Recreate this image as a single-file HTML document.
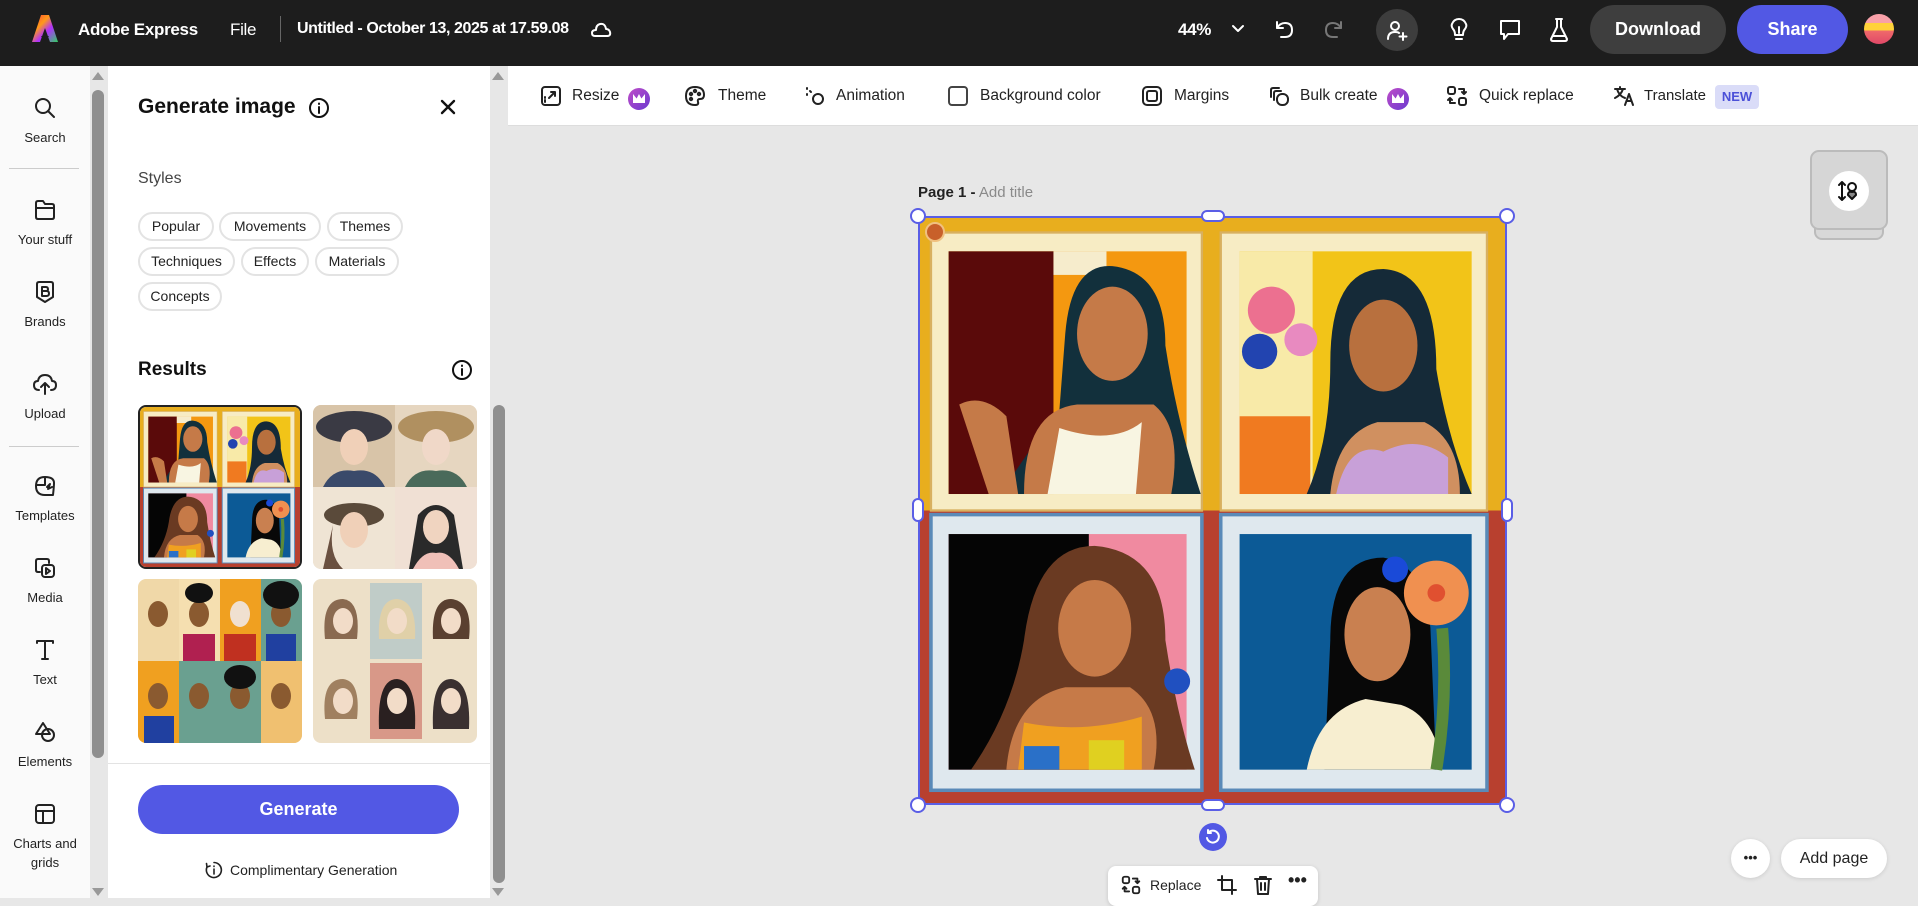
<!DOCTYPE html>
<html><head><meta charset="utf-8"><style>
*{box-sizing:border-box;margin:0;padding:0}
body{width:1918px;height:898px;overflow:hidden;font-family:"Liberation Sans",sans-serif;background:#e7e7e7;position:relative;color:#222}
.abs{position:absolute}
#hdr{left:0;top:0;width:1918px;height:66px;background:#1d1d1d;color:#fff}
#hdr .t{position:absolute;top:20px;font-size:17px;font-weight:bold;white-space:nowrap;letter-spacing:-0.3px}
svg.i{position:absolute;fill:none;stroke-width:2;stroke-linecap:round;stroke-linejoin:round}
#rail{left:0;top:66px;width:90px;height:832px;background:#fafafa}
.ri{position:absolute;left:0;width:90px;text-align:center;font-size:13px;color:#222}
.ri svg{display:block;margin:0 auto 10px;fill:none;stroke:#222;stroke-width:2;stroke-linecap:round;stroke-linejoin:round}
.sb{background:#8f8f8f;border-radius:6px;width:12px}
#panel{left:108px;top:66px;width:382px;height:832px;background:#fff}
.chip{position:absolute;height:29px;border:2px solid #e3e3e3;border-radius:15px;font-size:14px;line-height:25px;text-align:center;color:#222}
#tb{left:508px;top:66px;width:1410px;height:60px;background:#fff;border-bottom:1px solid #ddd}
.tt{position:absolute;top:21px;font-size:15.5px;color:#222;white-space:nowrap}
.crown{position:absolute;top:22px;width:22px;height:22px;border-radius:50%;background:linear-gradient(135deg,#c04cc8,#6a3ad0)}
.crown:after{content:"";position:absolute;left:5px;top:6px;width:12px;height:9px;background:#fff;clip-path:polygon(0 100%,0 0,30% 50%,50% 0,70% 50%,100% 0,100% 100%)}
.th{position:absolute;border-radius:8px;overflow:hidden}
</style></head><body>

<svg width="0" height="0" style="position:absolute">
<defs>
<symbol id="art" viewBox="0 0 1000 1000" preserveAspectRatio="none">
<rect width="1000" height="500" fill="#e8ae1e"/><rect y="500" width="1000" height="500" fill="#b8402f"/>
<rect x="22" y="28" width="460" height="472" fill="#f7ecc4" stroke="#d8b060" stroke-width="4"/>
<rect x="514" y="28" width="452" height="472" fill="#f7ecc4" stroke="#d8b060" stroke-width="4"/>
<rect x="22" y="507" width="460" height="468" fill="#dfe8ee" stroke="#5a8ab8" stroke-width="6"/>
<rect x="514" y="507" width="452" height="468" fill="#dfe8ee" stroke="#5a8ab8" stroke-width="6"/>
<rect x="52" y="60" width="404" height="412" fill="#f49810"/>
<rect x="52" y="60" width="178" height="412" fill="#5a0a0a"/>
<rect x="230" y="60" width="90" height="40" fill="#f6eccc"/>
<path d="M250 200 Q260 80 330 85 Q420 95 420 220 Q440 350 480 472 L140 472 Q200 380 240 330 Z" fill="#12303c"/>
<ellipse cx="330" cy="200" rx="60" ry="80" fill="#c57a48"/>
<path d="M180 472 Q180 330 270 320 L400 320 Q450 360 430 472Z" fill="#c57a48"/>
<path d="M220 472 L240 360 Q330 390 380 350 L370 472Z" fill="#f8f5e2"/>
<path d="M70 320 Q110 300 150 340 L170 472 L120 472Z" fill="#c57a48"/>
<rect x="546" y="60" width="394" height="412" fill="#f2c418"/>
<rect x="546" y="60" width="124" height="412" fill="#f8eaa8"/>
<rect x="546" y="340" width="120" height="132" fill="#f07a20"/>
<circle cx="600" cy="160" r="40" fill="#ec7090"/><circle cx="580" cy="230" r="30" fill="#2244b0"/><circle cx="650" cy="210" r="28" fill="#e88ac0"/>
<path d="M700 250 Q700 90 790 90 Q880 95 880 260 Q900 380 940 472 L660 472 Q700 380 700 250Z" fill="#152a38"/>
<ellipse cx="790" cy="220" rx="58" ry="78" fill="#b8703e"/>
<path d="M700 472 Q710 370 780 350 L860 350 Q920 380 920 472Z" fill="#d09060"/>
<path d="M710 472 Q730 380 790 400 Q850 370 900 410 L900 472Z" fill="#c8a0d8"/>
<rect x="52" y="540" width="404" height="400" fill="#f08aa0"/>
<rect x="52" y="540" width="238" height="400" fill="#050505"/>
<path d="M180 720 Q200 560 300 560 Q420 570 420 720 Q440 850 470 940 L90 940 Q160 840 180 720Z" fill="#6a3a22"/>
<ellipse cx="300" cy="700" rx="62" ry="82" fill="#c67a48"/>
<path d="M150 940 Q160 820 250 800 L360 800 Q420 840 400 940Z" fill="#c67a48"/>
<path d="M170 940 L180 860 Q280 880 380 850 L380 940Z" fill="#f0a020"/>
<rect x="180" y="900" width="60" height="40" fill="#2a70c8"/><rect x="290" y="890" width="60" height="50" fill="#e0d020"/>
<circle cx="440" cy="790" r="22" fill="#2050c0"/>
<rect x="546" y="540" width="394" height="400" fill="#0c5a96"/>
<path d="M700 720 Q700 580 790 580 Q860 590 870 700 L880 940 L690 940Z" fill="#080808"/>
<ellipse cx="780" cy="710" rx="56" ry="80" fill="#c98050"/>
<path d="M660 940 Q680 840 760 820 L820 830 Q880 850 890 940Z" fill="#f7eed0"/>
<circle cx="880" cy="640" r="55" fill="#f09050"/><circle cx="880" cy="640" r="15" fill="#e05030"/>
<path d="M890 700 Q900 820 880 940" stroke="#5a8a3a" stroke-width="20" fill="none"/>
<circle cx="810" cy="600" r="22" fill="#1a4ad8"/>
</symbol>
</defs></svg>

<div id="hdr" class="abs">
<svg class="i" style="left:31px;top:14px" width="28" height="30" viewBox="0 0 28 30"><defs><linearGradient id="lg" x1="0" y1="0" x2="1" y2="1"><stop offset="0" stop-color="#ff3a3a"/><stop offset=".35" stop-color="#ff9a1a"/><stop offset=".6" stop-color="#b030ff"/><stop offset="1" stop-color="#30d060"/></linearGradient></defs><path d="M10 1 L18 1 L27 28 L19 28 L14 14 L9 28 L1 28 Z" fill="url(#lg)" stroke="none"/><path d="M10 22 L18 22 L14 27 Z" fill="#1d1d1d" stroke="none"/></svg>
<div class="t" style="left:78px">Adobe Express</div>
<div class="t" style="left:230px;font-weight:normal">File</div>
<div class="abs" style="left:280px;top:16px;width:1px;height:26px;background:#666"></div>
<div class="t" style="left:297px;font-size:16px;letter-spacing:-0.4px">Untitled - October 13, 2025 at 17.59.08</div>
<svg class="i" style="left:589px;top:20px;stroke:#fff" width="24" height="20" viewBox="0 0 24 20"><path d="M6 16 H18 Q22 16 21 12 Q20 9 17 9 Q16 3 11 4 Q7 5 7 10 Q3 10 3 13 Q3 16 6 16Z"/></svg>
<div class="t" style="left:1178px">44%</div>
<svg class="i" style="left:1231px;top:24px;stroke:#fff" width="14" height="10" viewBox="0 0 14 10"><path d="M2 2 L7 7 L12 2"/></svg>
<svg class="i" style="left:1272px;top:18px;stroke:#fff" width="24" height="24" viewBox="0 0 24 24"><path d="M5 4 V10 H11"/><path d="M5 10 Q8 5 13 5 Q20 5 20 12 Q20 19 13 19 H9"/></svg>
<svg class="i" style="left:1322px;top:18px;stroke:#777" width="24" height="24" viewBox="0 0 24 24"><path d="M19 4 V10 H13"/><path d="M19 10 Q16 5 11 5 Q4 5 4 12 Q4 19 11 19 H15"/></svg>
<div class="abs" style="left:1376px;top:9px;width:42px;height:42px;border-radius:50%;background:#3d3d3d"></div>
<svg class="i" style="left:1385px;top:18px;stroke:#fff" width="24" height="24" viewBox="0 0 24 24"><circle cx="10" cy="8" r="4"/><path d="M3 21 Q3 14 10 14 Q13 14 14 15"/><path d="M18 15 V22 M14.5 18.5 H21.5"/></svg>
<svg class="i" style="left:1448px;top:17px;stroke:#fff" width="22" height="26" viewBox="0 0 22 26"><path d="M7 18 Q7 14 5 12 Q3 9 4 7 Q6 2 11 2 Q16 2 18 7 Q19 9 17 12 Q15 14 15 18 Z"/><path d="M8 22 H14"/><path d="M11 10 V16"/></svg>
<svg class="i" style="left:1498px;top:18px;stroke:#fff" width="24" height="24" viewBox="0 0 24 24"><path d="M3 3 H21 V16 H10 L6 21 V16 H3 Z"/></svg>
<svg class="i" style="left:1548px;top:17px;stroke:#fff" width="22" height="26" viewBox="0 0 22 26"><path d="M8 2 H14 M9 2 V10 L3 22 Q3 24 5 24 H17 Q19 24 19 22 L13 10 V2"/><path d="M5 19 H17"/></svg>
<div class="abs" style="left:1590px;top:5px;width:136px;height:49px;border-radius:25px;background:#3e3e3e;color:#fff;font-weight:bold;font-size:18px;text-align:center;line-height:49px">Download</div>
<div class="abs" style="left:1737px;top:5px;width:111px;height:49px;border-radius:25px;background:#5258e4;color:#fff;font-weight:bold;font-size:18px;text-align:center;line-height:49px">Share</div>
<div class="abs" style="left:1864px;top:14px;width:30px;height:30px;border-radius:50%;background:linear-gradient(#f8a0a8 0,#f8a0a8 30%,#ffd23a 30%,#ffd23a 55%,#f06a6a 55%,#e04868 100%)"></div>
</div>

<div id="rail" class="abs">
<div class="ri" style="top:30px"><svg width="24" height="24" viewBox="0 0 24 24"><circle cx="10" cy="10" r="7"/><path d="M15 15 L21 21"/></svg>Search</div>
<div class="abs" style="left:9px;top:102px;width:70px;height:1px;background:#ccc"></div>
<div class="ri" style="top:132px"><svg width="24" height="24" viewBox="0 0 24 24"><path d="M3 5 Q3 3 5 3 H10 L12 6 H19 Q21 6 21 8 V19 Q21 21 19 21 H5 Q3 21 3 19 Z M3 10 H21"/></svg>Your stuff</div>
<div class="ri" style="top:214px"><svg width="24" height="24" viewBox="0 0 24 24"><path d="M4 4 Q4 2 6 2 H18 Q20 2 20 4 V17 L12 22 L4 17 Z"/><path d="M9 7 H13 Q15 7 15 9.5 Q15 11 13 11 H9 Z M9 11 H13.5 Q16 11 16 13.5 Q16 16 13.5 16 H9 Z M9 7 V16"/></svg>Brands</div>
<div class="ri" style="top:306px"><svg width="26" height="24" viewBox="0 0 26 24"><path d="M7 18 Q2 18 2 13 Q2 9 6 9 Q7 3 13 3 Q19 3 20 9 Q24 9 24 13 Q24 18 19 18"/><path d="M13 22 V11 M9 15 L13 11 L17 15"/></svg>Upload</div>
<div class="abs" style="left:9px;top:380px;width:70px;height:1px;background:#ccc"></div>
<div class="ri" style="top:408px"><svg width="24" height="24" viewBox="0 0 24 24"><path d="M12 3 Q3 3 3 12 Q3 21 12 21 L20 21 Q21 12 21 9 Q21 3 12 3Z M12 3 V11 H3 M14 13 L17 10 L15 15 L19 13"/></svg>Templates</div>
<div class="ri" style="top:490px"><svg width="24" height="24" viewBox="0 0 24 24"><path d="M16 7 V5 Q16 3 14 3 H5 Q3 3 3 5 V14 Q3 16 5 16 H7"/><rect x="9" y="9" width="12" height="12" rx="3"/><path d="M13 12 L17 15 L13 18 Z"/></svg>Media</div>
<div class="ri" style="top:572px"><svg width="24" height="24" viewBox="0 0 24 24"><path d="M4 5 V3 H20 V5 M12 3 V21 M9 21 H15"/></svg>Text</div>
<div class="ri" style="top:654px"><svg width="24" height="24" viewBox="0 0 24 24"><path d="M10 3 L3 14 H17 Z"/><circle cx="15" cy="15" r="6"/></svg>Elements</div>
<div class="ri" style="top:736px;line-height:19px"><svg width="24" height="24" viewBox="0 0 24 24" style="margin-bottom:8px"><rect x="3" y="3" width="18" height="18" rx="3"/><path d="M3 9 H21 M10 9 V21"/></svg>Charts and<br>grids</div>
</div>
<div class="abs sb" style="left:92px;top:90px;height:668px"></div>
<div class="abs" style="left:92px;top:72px;width:0;height:0;border-left:6px solid transparent;border-right:6px solid transparent;border-bottom:8px solid #999"></div>
<div class="abs" style="left:92px;top:888px;width:0;height:0;border-left:6px solid transparent;border-right:6px solid transparent;border-top:8px solid #999"></div>

<div id="panel" class="abs">
<div class="abs" style="left:30px;top:29px;font-size:21px;font-weight:bold;color:#111">Generate image</div>
<svg class="i" style="left:200px;top:31px;stroke:#111" width="22" height="22" viewBox="0 0 22 22"><circle cx="11" cy="11" r="9"/><path d="M11 10 V16 M11 6.5 V7"/></svg>
<svg class="i" style="left:332px;top:33px;stroke:#111;stroke-width:2.4" width="16" height="16" viewBox="0 0 16 16"><path d="M2 2 L14 14 M14 2 L2 14"/></svg>
<div class="abs" style="left:30px;top:104px;font-size:16px;color:#444">Styles</div>
<div class="chip" style="left:30px;top:146px;width:76px">Popular</div>
<div class="chip" style="left:111px;top:146px;width:102px">Movements</div>
<div class="chip" style="left:219px;top:146px;width:76px">Themes</div>
<div class="chip" style="left:30px;top:181px;width:97px">Techniques</div>
<div class="chip" style="left:133px;top:181px;width:68px">Effects</div>
<div class="chip" style="left:207px;top:181px;width:84px">Materials</div>
<div class="chip" style="left:30px;top:216px;width:84px">Concepts</div>
<div class="abs" style="left:30px;top:293px;font-size:19px;font-weight:bold;color:#111">Results</div>
<svg class="i" style="left:343px;top:293px;stroke:#111" width="22" height="22" viewBox="0 0 22 22"><circle cx="11" cy="11" r="9"/><path d="M11 10 V16 M11 6.5 V7"/></svg>

<div class="th" style="left:30px;top:339px;width:164px;height:164px;border:2px solid #222"><svg width="160" height="160"><use href="#art" width="160" height="160"/></svg></div>
<div class="th" style="left:205px;top:339px;width:164px;height:164px;background:#e8d8c0">
<svg width="164" height="164" viewBox="0 0 164 164"><rect width="82" height="82" fill="#d8c4a8"/><rect x="82" width="82" height="82" fill="#e6d6c0"/><rect y="82" width="82" height="82" fill="#efe4d4"/><rect x="82" y="82" width="82" height="82" fill="#f0e0d4"/>
<ellipse cx="41" cy="22" rx="38" ry="16" fill="#3a3a44"/><ellipse cx="123" cy="22" rx="38" ry="16" fill="#b09060"/>
<ellipse cx="41" cy="42" rx="14" ry="18" fill="#f0d0b8"/><ellipse cx="123" cy="42" rx="14" ry="18" fill="#f0d8c8"/>
<path d="M10 82 Q20 62 41 66 Q62 62 72 82Z" fill="#3a4a6a"/><path d="M92 82 Q102 62 123 66 Q144 62 154 82Z" fill="#4a6a5a"/>
<ellipse cx="41" cy="110" rx="30" ry="12" fill="#5a4a3a"/><ellipse cx="41" cy="125" rx="14" ry="18" fill="#f0d0b8"/><path d="M20 120 Q15 150 30 164 H10Z" fill="#6a5040"/>
<path d="M105 110 Q123 90 141 110 L150 164 H96Z" fill="#2a2a2a"/><ellipse cx="123" cy="122" rx="13" ry="17" fill="#f0d4c0"/><path d="M100 164 Q110 145 123 148 Q136 145 146 164Z" fill="#f0c0b8"/></svg></div>
<div class="th" style="left:30px;top:513px;width:164px;height:164px">
<svg width="164" height="164" viewBox="0 0 164 164"><rect width="164" height="164" fill="#f0d8a8"/><rect x="41" width="41" height="82" fill="#f5dfb0"/><rect x="82" width="41" height="82" fill="#f0a020"/><rect x="123" width="41" height="82" fill="#6aa090"/><rect y="82" width="41" height="82" fill="#f0a020"/><rect x="41" y="82" width="41" height="82" fill="#6aa090"/><rect x="82" y="82" width="41" height="82" fill="#6aa090"/><rect x="123" y="82" width="41" height="82" fill="#f0c070"/>
<g fill="#8a5a30"><ellipse cx="20" cy="35" rx="10" ry="13"/><ellipse cx="61" cy="35" rx="10" ry="13"/><ellipse cx="143" cy="35" rx="10" ry="13"/><ellipse cx="20" cy="117" rx="10" ry="13"/><ellipse cx="61" cy="117" rx="10" ry="13"/><ellipse cx="102" cy="117" rx="10" ry="13"/><ellipse cx="143" cy="117" rx="10" ry="13"/></g><ellipse cx="102" cy="35" rx="10" ry="13" fill="#f0e0d0"/>
<g fill="#111"><ellipse cx="61" cy="14" rx="14" ry="10"/><ellipse cx="143" cy="16" rx="18" ry="14"/><ellipse cx="102" cy="98" rx="16" ry="12"/></g>
<g fill="#b02050"><rect x="45" y="55" width="32" height="27"/><rect x="128" y="55" width="30" height="27" fill="#2040a0"/><rect x="6" y="137" width="30" height="27" fill="#2040a0"/><rect x="86" y="55" width="32" height="27" fill="#c03020"/></g></svg></div>
<div class="th" style="left:205px;top:513px;width:164px;height:164px">
<svg width="164" height="164" viewBox="0 0 164 164"><rect width="164" height="164" fill="#ede0c8"/><rect x="57" y="4" width="52" height="76" fill="#c0ccc8"/><rect x="57" y="84" width="52" height="76" fill="#d89888"/>
<g fill="#8a6a50"><path d="M12 60 Q8 20 30 20 Q48 22 44 60Z"/><path d="M120 60 Q118 20 138 20 Q160 22 156 60Z" fill="#5a4030"/><path d="M12 140 Q8 100 30 100 Q48 102 44 140Z" fill="#a08060"/><path d="M66 150 Q64 100 84 100 Q104 102 102 150Z" fill="#2a2020"/><path d="M120 150 Q118 100 138 100 Q158 102 156 150Z" fill="#3a3030"/></g><path d="M66 60 Q64 20 84 20 Q104 22 102 60Z" fill="#e0d0a8"/>
<g fill="#f2dcc8"><ellipse cx="30" cy="42" rx="10" ry="13"/><ellipse cx="84" cy="42" rx="10" ry="13"/><ellipse cx="138" cy="42" rx="10" ry="13"/><ellipse cx="30" cy="122" rx="10" ry="13"/><ellipse cx="84" cy="122" rx="10" ry="13"/><ellipse cx="138" cy="122" rx="10" ry="13"/></g></svg></div>
<div class="abs" style="left:0;top:697px;width:382px;height:1px;background:#e3e3e3"></div>
<div class="abs" style="left:30px;top:719px;width:321px;height:49px;border-radius:25px;background:#5258e4;color:#fff;font-weight:bold;font-size:18px;text-align:center;line-height:49px">Generate</div>
<svg class="i" style="left:97px;top:795px;stroke:#222;stroke-width:1.6" width="18" height="18" viewBox="0 0 18 18"><path d="M9 1.5 A7.5 7.5 0 1 1 2 6"/><path d="M2 6 L1.5 2.5 M2 6 L5 5"/><path d="M9 8 V13 M9 5 V5.5"/></svg>
<div class="abs" style="left:122px;top:796px;font-size:14px;color:#222">Complimentary Generation</div>
</div>
<div class="abs sb" style="left:493px;top:405px;height:478px"></div>
<div class="abs" style="left:492px;top:72px;width:0;height:0;border-left:6px solid transparent;border-right:6px solid transparent;border-bottom:8px solid #999"></div>
<div class="abs" style="left:492px;top:888px;width:0;height:0;border-left:6px solid transparent;border-right:6px solid transparent;border-top:8px solid #999"></div>

<div id="tb" class="abs">
<svg class="i" style="left:32px;top:19px;stroke:#222" width="22" height="22" viewBox="0 0 22 22"><rect x="2" y="2" width="18" height="18" rx="3"/><path d="M9 13 L15 7 M11 7 H15 V11 M5 15 V17 M5 12 V13"/></svg>
<div class="tt" style="left:64px">Resize</div><div class="crown" style="left:120px"></div>
<svg class="i" style="left:176px;top:19px;stroke:#222" width="22" height="22" viewBox="0 0 22 22"><path d="M11 2 Q20 2 20 10 Q20 14 16 14 Q13 14 14 17 Q15 20 11 20 Q2 20 2 11 Q2 2 11 2Z"/><circle cx="7" cy="9" r="1.2"/><circle cx="11" cy="6" r="1.2"/><circle cx="15" cy="9" r="1.2"/><circle cx="7" cy="14" r="1.2"/></svg>
<div class="tt" style="left:210px">Theme</div>
<svg class="i" style="left:296px;top:19px;stroke:#222" width="22" height="22" viewBox="0 0 22 22"><circle cx="14" cy="14" r="5"/><path d="M3 3 V4 M6 6 L7 7 M3 9 V10"/></svg>
<div class="tt" style="left:328px">Animation</div>
<div class="abs" style="left:440px;top:20px;width:20px;height:20px;border:2px solid #444;border-radius:4px"></div>
<div class="tt" style="left:472px">Background color</div>
<svg class="i" style="left:633px;top:19px;stroke:#222" width="22" height="22" viewBox="0 0 22 22"><rect x="2" y="2" width="18" height="18" rx="4"/><rect x="6" y="6" width="10" height="10" rx="2"/></svg>
<div class="tt" style="left:666px">Margins</div>
<svg class="i" style="left:760px;top:19px;stroke:#222" width="22" height="22" viewBox="0 0 22 22"><path d="M3 12 V5 Q3 3 5 3 H11 M6 15 V8 Q6 6 8 6 H13"/><rect x="9" y="9" width="11" height="11" rx="5"/></svg>
<div class="tt" style="left:792px">Bulk create</div><div class="crown" style="left:879px"></div>
<svg class="i" style="left:937px;top:18px;stroke:#222" width="24" height="24" viewBox="0 0 24 24"><rect x="3" y="3" width="7" height="7" rx="2"/><rect x="14" y="14" width="7" height="7" rx="2"/><path d="M14 5 H19 V10 M17 8 L19 10 L21 8 M10 19 H5 V14 M3 16 L5 14 L7 16"/></svg>
<div class="tt" style="left:971px">Quick replace</div>
<svg class="i" style="left:1105px;top:19px;stroke:#222" width="24" height="22" viewBox="0 0 24 22"><path d="M2 4 H12 M7 2 V4 M4 4 Q6 11 12 13 M10 4 Q8 10 2 13 M12 20 L16 9 L20 20 M13.5 16 H18.5"/></svg>
<div class="tt" style="left:1136px;font-size:15px">Translate</div>
<div class="abs" style="left:1207px;top:19px;width:44px;height:24px;border-radius:4px;background:#dadcf8;color:#4b50d8;font-size:13px;font-weight:bold;text-align:center;line-height:24px">NEW</div>
</div>

<div class="abs" style="left:918px;top:184px;font-size:15px;color:#222"><b>Page 1 -</b> <span style="color:#8a8a8a">Add title</span></div>
<svg class="abs" style="left:918px;top:216px" width="589" height="589"><use href="#art" width="589" height="589"/></svg>
<div class="abs" style="left:918px;top:216px;width:589px;height:589px;border:2px solid #5a5ee6"></div>
<div class="abs" style="left:925px;top:222px;width:20px;height:20px;border-radius:50%;background:#c8602a;border:2px solid #f0c080"></div>
<div class="abs" style="left:910px;top:208px;width:16px;height:16px;border-radius:50%;background:#fff;border:2px solid #5a5ee6"></div>
<div class="abs" style="left:1499px;top:208px;width:16px;height:16px;border-radius:50%;background:#fff;border:2px solid #5a5ee6"></div>
<div class="abs" style="left:910px;top:797px;width:16px;height:16px;border-radius:50%;background:#fff;border:2px solid #5a5ee6"></div>
<div class="abs" style="left:1499px;top:797px;width:16px;height:16px;border-radius:50%;background:#fff;border:2px solid #5a5ee6"></div>
<div class="abs" style="left:1201px;top:210px;width:24px;height:12px;border-radius:6px;background:#fff;border:2px solid #5a5ee6"></div>
<div class="abs" style="left:1201px;top:799px;width:24px;height:12px;border-radius:6px;background:#fff;border:2px solid #5a5ee6"></div>
<div class="abs" style="left:912px;top:498px;width:12px;height:24px;border-radius:6px;background:#fff;border:2px solid #5a5ee6"></div>
<div class="abs" style="left:1501px;top:498px;width:12px;height:24px;border-radius:6px;background:#fff;border:2px solid #5a5ee6"></div>
<div class="abs" style="left:1199px;top:823px;width:28px;height:28px;border-radius:50%;background:#5258e4"></div>
<svg class="i" style="left:1204px;top:828px;stroke:#fff;stroke-width:2" width="18" height="18" viewBox="0 0 18 18"><path d="M4 5 A6 6 0 1 1 3 10"/><path d="M4 2 V5 H7"/></svg>

<div class="abs" style="left:1108px;top:866px;width:210px;height:40px;border-radius:8px;background:#fff;box-shadow:0 1px 4px rgba(0,0,0,.15)"></div>
<svg class="i" style="left:1120px;top:874px;stroke:#222" width="22" height="22" viewBox="0 0 24 24"><rect x="3" y="3" width="7" height="7" rx="2"/><rect x="14" y="14" width="7" height="7" rx="2"/><path d="M14 5 H19 V10 M17 8 L19 10 L21 8 M10 19 H5 V14 M3 16 L5 14 L7 16"/></svg>
<div class="abs" style="left:1150px;top:877px;font-size:14px">Replace</div>
<svg class="i" style="left:1217px;top:875px;stroke:#222" width="20" height="20" viewBox="0 0 20 20"><path d="M5 1 V15 H19 M1 5 H15 V19"/></svg>
<svg class="i" style="left:1253px;top:875px;stroke:#222" width="20" height="20" viewBox="0 0 20 20"><path d="M2 4 H18 M7 4 V2 H13 V4 M4 4 L5 19 H15 L16 4 M8 8 V15 M12 8 V15"/></svg>
<div class="abs" style="left:1288px;top:870px;font-size:18px;font-weight:bold">•••</div>

<div class="abs" style="left:1731px;top:839px;width:39px;height:39px;border-radius:50%;background:#fff;box-shadow:0 1px 4px rgba(0,0,0,.12);text-align:center;line-height:37px;font-size:13px;font-weight:bold">•••</div>
<div class="abs" style="left:1781px;top:839px;width:106px;height:39px;border-radius:20px;background:#fff;box-shadow:0 1px 4px rgba(0,0,0,.12);text-align:center;line-height:39px;font-size:16px">Add page</div>

<div class="abs" style="left:1814px;top:180px;width:70px;height:60px;border-radius:8px;background:#d8d8d8;border:2px solid #bbb"></div>
<div class="abs" style="left:1810px;top:150px;width:78px;height:80px;border-radius:9px;background:#d6d6d6;border:2px solid #bbb"></div>
<div class="abs" style="left:1829px;top:171px;width:40px;height:40px;border-radius:50%;background:#fff"></div>
<svg class="i" style="left:1837px;top:179px;stroke:#111;stroke-width:2" width="24" height="24" viewBox="0 0 24 24"><path d="M5 3 V21 M2 6 L5 3 L8 6 M2 18 L5 21 L8 18"/><circle cx="15" cy="8" r="4"/><path d="M11 16 Q11 12 15 13 Q19 12 19 16 L15 20 Z" fill="#888"/></svg>
</body></html>
